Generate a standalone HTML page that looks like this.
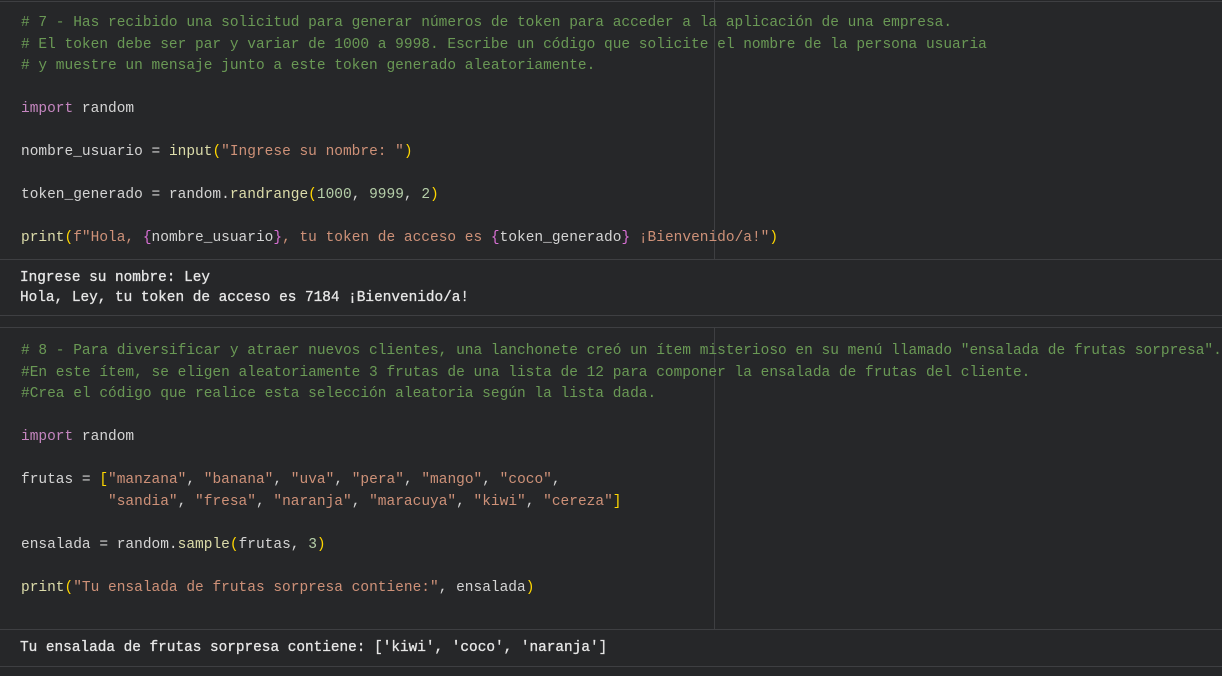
<!DOCTYPE html>
<html><head><meta charset="utf-8"><style>
html,body{margin:0;padding:0;background:#262729;width:1222px;height:676px;overflow:hidden}
body{position:relative;font-family:"Liberation Mono",monospace;font-size:14.5px;color:#d4d4d4}
.hl{position:absolute;left:0;width:1222px;height:1px;background:#3e3f42}
.vl{position:absolute;left:714px;width:1px;background:#3e3f42}
pre{position:absolute;margin:0;font-family:inherit;font-size:inherit;white-space:pre}
.code{left:21px;line-height:21.5px}
.out{left:20px;line-height:19.5px;color:#e6e6e6;font-size:14.4px;-webkit-text-stroke:0.3px #e6e6e6}
.c{color:#6a9955}.k{color:#c586c0}.s{color:#ce9178}.f{color:#dcdcaa}.n{color:#b5cea8}.p{color:#ffd700}.b{color:#da70d6}
</style></head><body>
<div class="hl" style="top:1px"></div>
<div class="vl" style="top:0;height:259px"></div>
<div class="hl" style="top:259px"></div>
<div class="hl" style="top:315px"></div>
<div class="hl" style="top:327px"></div>
<div class="vl" style="top:327px;height:302px"></div>
<div class="hl" style="top:629px"></div>
<div class="hl" style="top:666px"></div>
<pre class="code" style="top:13px"><span class="c"># 7 - Has recibido una solicitud para generar números de token para acceder a la aplicación de una empresa.
# El token debe ser par y variar de 1000 a 9998. Escribe un código que solicite el nombre de la persona usuaria
# y muestre un mensaje junto a este token generado aleatoriamente.</span>

<span class="k">import</span> random

nombre_usuario = <span class="f">input</span><span class="p">(</span><span class="s">"Ingrese su nombre: "</span><span class="p">)</span>

token_generado = random.<span class="f">randrange</span><span class="p">(</span><span class="n">1000</span>, <span class="n">9999</span>, <span class="n">2</span><span class="p">)</span>

<span class="f">print</span><span class="p">(</span><span class="s">f"Hola, </span><span class="b">{</span>nombre_usuario<span class="b">}</span><span class="s">, tu token de acceso es </span><span class="b">{</span>token_generado<span class="b">}</span><span class="s"> ¡Bienvenido/a!"</span><span class="p">)</span></pre>
<pre class="out" style="top:269px">Ingrese su nombre: Ley
Hola, Ley, tu token de acceso es 7184 ¡Bienvenido/a!</pre>
<pre class="code" style="top:341px"><span class="c"># 8 - Para diversificar y atraer nuevos clientes, una lanchonete creó un ítem misterioso en su menú llamado "ensalada de frutas sorpresa".
#En este ítem, se eligen aleatoriamente 3 frutas de una lista de 12 para componer la ensalada de frutas del cliente.
#Crea el código que realice esta selección aleatoria según la lista dada.</span>

<span class="k">import</span> random

frutas = <span class="p">[</span><span class="s">"manzana"</span>, <span class="s">"banana"</span>, <span class="s">"uva"</span>, <span class="s">"pera"</span>, <span class="s">"mango"</span>, <span class="s">"coco"</span>,
          <span class="s">"sandia"</span>, <span class="s">"fresa"</span>, <span class="s">"naranja"</span>, <span class="s">"maracuya"</span>, <span class="s">"kiwi"</span>, <span class="s">"cereza"</span><span class="p">]</span>

ensalada = random.<span class="f">sample</span><span class="p">(</span>frutas, <span class="n">3</span><span class="p">)</span>

<span class="f">print</span><span class="p">(</span><span class="s">"Tu ensalada de frutas sorpresa contiene:"</span>, ensalada<span class="p">)</span></pre>
<pre class="out" style="top:639px">Tu ensalada de frutas sorpresa contiene: ['kiwi', 'coco', 'naranja']</pre>
</body></html>
